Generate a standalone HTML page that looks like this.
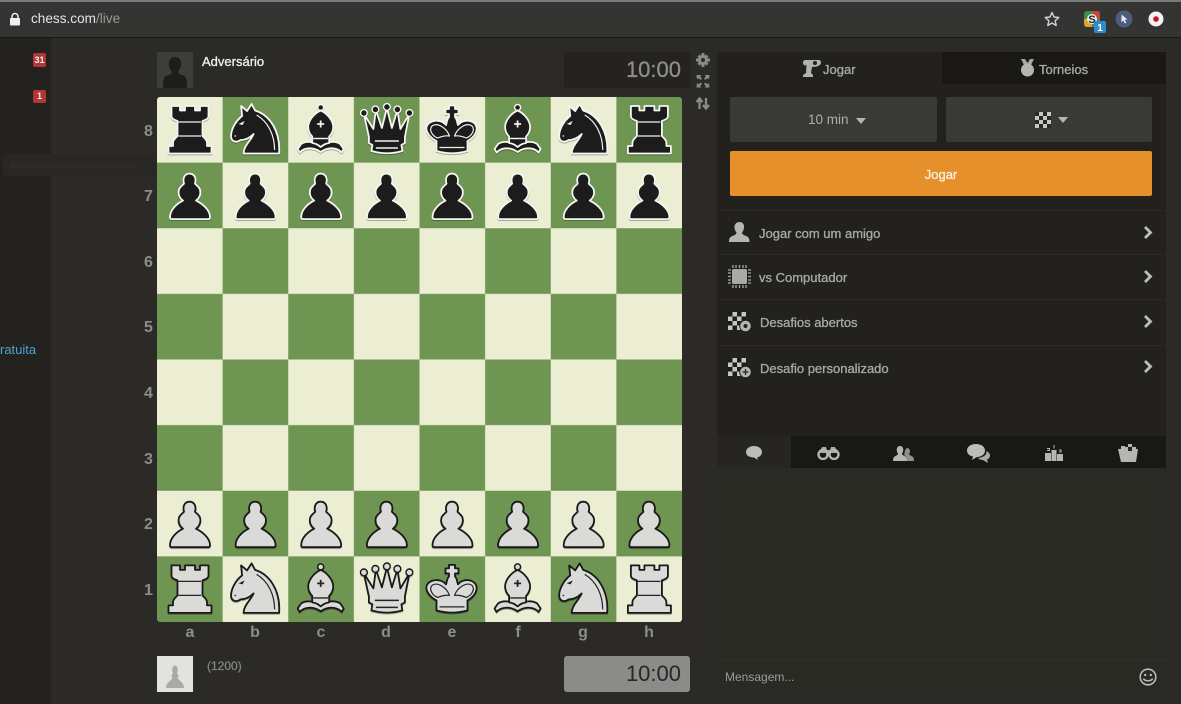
<!DOCTYPE html>
<html lang="pt"><head><meta charset="utf-8"><title>chess.com/live</title>
<style>
*{box-sizing:border-box}
html,body{margin:0;padding:0}
body{width:1181px;height:704px;overflow:hidden;position:relative;background:#2c2a27;font-family:"Liberation Sans",sans-serif;color:#bcbcb8}
.a{position:absolute}
.t{position:absolute;white-space:nowrap;line-height:1}
.st{-webkit-text-stroke:.3px currentColor}
.b{--f:#1c1c1c;--s:#f6f6f2;--i:#f0f0ec;filter:drop-shadow(0 1px 0 rgba(0,0,0,.3))}
.w{--f:#dadad8;--s:#191919;--i:#232323;filter:drop-shadow(0 1px 0 rgba(0,0,0,.3))}
.rank{position:absolute;left:144px;font:bold 16px "Liberation Sans",sans-serif;color:#8d8d89;line-height:1}
.file{position:absolute;top:625px;width:66px;text-align:center;font:bold 16px "Liberation Sans",sans-serif;color:#8d8d89;line-height:1}
.row{position:absolute;left:759px;font:13px "Liberation Sans",sans-serif;-webkit-text-stroke:.3px #a9a9a5;color:#a9a9a5;line-height:1;white-space:nowrap}
.div{position:absolute;left:720px;width:446px;height:1px;background:#2b2a26}
</style></head><body>
<svg width="0" height="0" style="position:absolute">
<defs>
<pattern id="chk" patternUnits="userSpaceOnUse" width="131.25" height="131.25"><rect width="131.25" height="131.25" fill="#eceed4"/><rect x="65.625" width="65.625" height="65.625" fill="#6f9552"/><rect y="65.625" width="65.625" height="65.625" fill="#6f9552"/></pattern>
<pattern id="mini" patternUnits="userSpaceOnUse" width="8" height="8"><rect width="8" height="8" fill="#c6c6c2"/><rect width="4" height="4" fill="#2a2927"/><rect x="4" y="4" width="4" height="4" fill="#2a2927"/></pattern>
<pattern id="mini2" patternUnits="userSpaceOnUse" width="9" height="9"><rect width="9" height="9" fill="#c6c6c2"/><rect width="4.500" height="4.500" fill="#1d1c1a"/><rect x="4.500" y="4.500" width="4.500" height="4.500" fill="#1d1c1a"/></pattern>
<symbol id="r" viewBox="0 0 66 66" width="66" height="66"><g stroke-linejoin="round">
<path fill="var(--f)" stroke="var(--s)" stroke-width="1.800" d="M14.500 9h8.500v4.500h5v-4.500h10v4.500h5v-4.500h8.500v10.500c0 2-3 3.500-6 4.500v15c2 2.500 4.500 3.500 4.500 7v3h4.500v7.500h-43v-7.500h4.500v-3c0-3.500 2.500-4.500 4.500-7v-15c-3-1-6-2.500-6-4.500z"/>
<path fill="none" stroke="var(--i)" stroke-width="1.300" d="M21.500 25h22.500M21.500 39h22.500"/></g></symbol>
<symbol id="n" viewBox="0 0 66 66" width="66" height="66"><g stroke-linejoin="round">
<path fill="var(--f)" stroke="var(--s)" stroke-width="1.800" d="M21 56.500C21 49 28 44 31 37C27 41 22 43 18 43C14 46 9 45 8.500 40C8 33 13 24 19.500 19L18.500 9L24.500 14L29 7L32.500 13.500C47 18 58 34 56.500 56.500Z"/>
<path fill="none" stroke="var(--i)" stroke-width="1.200" d="M34 18C46 25 52 39 52 53"/>
<path fill="var(--i)" d="M16 27l6-3-2 4zM12 38l2 1-2 1z"/></g></symbol>
<symbol id="B" viewBox="0 0 66 66" width="66" height="66"><g stroke-linejoin="round">
<circle cx="32.500" cy="10.500" r="3" fill="var(--f)" stroke="var(--s)" stroke-width="1.500"/>
<path fill="var(--f)" stroke="var(--s)" stroke-width="1.800" d="M32.500 49.500C28 44.500 18 43.500 13 47L9.500 52L11.500 55.500C16 50.500 25 49.500 32.500 55C40 49.500 49 50.500 53.500 55.500L55.500 52L52 47C47 43.500 37 44.500 32.500 49.500Z"/>
<path fill="var(--f)" stroke="var(--s)" stroke-width="1.800" d="M32.500 13.500C39.500 16.500 45 24 45 30C45 35 43 37.500 41 39.500V46C37 46.500 35 48 32.500 50C30 48 28 46.500 24 46V39.500C22 37.500 20 35 20 30C20 24 25.500 16.500 32.500 13.500Z"/>
<path fill="none" stroke="var(--i)" stroke-width="1.800" d="M32.500 23.500v7M29 27h7"/><path fill="none" stroke="var(--i)" stroke-width="1.400" d="M25 41.500h15"/></g></symbol>
<symbol id="q" viewBox="0 0 66 66" width="66" height="66"><g stroke-linejoin="round">
<path fill="var(--f)" stroke="var(--s)" stroke-width="1.800" d="M10 17L15 40V46L18.500 48L17.500 54Q33 58.500 48.500 54L47.500 48L51 46V40L55.500 17L46.500 32L43.500 13L38 31L33 11L28 31L22 13L19.500 32Z"/>
<g fill="var(--f)" stroke="var(--s)" stroke-width="1.400"><circle cx="10" cy="16" r="3.400"/><circle cx="21.500" cy="12.500" r="3.400"/><circle cx="33" cy="10" r="3.400"/><circle cx="43.500" cy="12.500" r="3.400"/><circle cx="55.500" cy="16" r="3.400"/></g>
<path fill="none" stroke="var(--i)" stroke-width="1.500" d="M21 44h24M22 51h22"/></g></symbol>
<symbol id="k" viewBox="0 0 66 66" width="66" height="66"><g stroke-linejoin="round">
<path fill="var(--f)" stroke="var(--s)" stroke-width="1.800" d="M29.500 8.500h6v3.500h3.500v5h-3.500v3C37.500 22 37.500 25 38.500 28C43 21.500 55 22.500 57 30C58 35 54 41 48 44V54Q32.500 58.500 17 54V44C11 41 6 35 7 30C9 22.500 22 21.500 26.500 28C27.500 25 27.500 22 29.500 20V17H26V12H29.500Z"/>
<path fill="none" stroke="var(--i)" stroke-width="1.200" d="M30 39C27 31 18 25 12.500 29C9 33 13 39 18 41C22 39.500 27 38.500 30 39ZM35 39C38 31 47 25 52.500 29C56 33 52 39 47 41C43 39.500 38 38.500 35 39ZM20 50.500h25"/></g></symbol>
<symbol id="p" viewBox="0 0 66 66" width="66" height="66"><path fill="var(--f)" stroke="var(--s)" stroke-width="1.800" stroke-linejoin="round" d="M13 54.500C13 47 20 41 26 38C22 35 21 31 22 27C23 24 26 22.500 27 21C25 14 29 11 32.500 11C36 11 40 14 38 21C39 22.500 42 24 43 27C44 31 43 35 39 38C45 41 53 47 53 54.500Q53 56.500 51 56.500H15Q13 56.500 13 54.500Z"/></symbol>
</defs></svg>

<!-- sidebar -->
<div class="a" style="left:0;top:38px;width:51px;height:666px;background:#23221f"></div>
<div class="a" style="left:3px;top:154px;width:154px;height:22px;background:#282724;border-radius:3px"></div>
<div class="a" style="left:10px;top:163px;width:125px;height:5px;background:#2c2b28"></div>
<div class="a" style="left:33px;top:53px;width:13px;height:14px;background:#b23636;border-radius:2px;color:#eee;font:bold 9px/14px 'Liberation Sans',sans-serif;text-align:center">31</div>
<div class="a" style="left:33px;top:90px;width:13px;height:13px;background:#b23636;border-radius:2px;color:#eee;font:bold 9px/13px 'Liberation Sans',sans-serif;text-align:center">1</div>
<div class="t" style="left:0;top:343px;font-size:13px;color:#4ba3cf">ratuita</div>

<!-- browser bar -->
<div class="a" style="left:0;top:0;width:1181px;height:38px;background:#343433;border-bottom:1px solid #191918;border-top:2px solid #7a7a7a"></div>
<svg class="a" style="left:9px;top:12px" width="12" height="14" viewBox="0 0 12 14"><path d="M3 7V4.500a3 3 0 0 1 6 0V7" fill="none" stroke="#f0f0f0" stroke-width="1.500"/><rect x="1" y="6" width="10" height="7.500" rx="1" fill="#f0f0f0"/></svg>
<div class="t" style="left:31px;top:12px;font-size:13.600px;color:#e4e4e4">chess.com<span style="color:#9a9a98">/live</span></div>
<svg class="a" style="left:1044px;top:11px" width="16" height="16" viewBox="0 0 16 16"><path d="M8 1.500l2 4.500 4.800.5-3.600 3.200 1 4.800L8 12l-4.200 2.500 1-4.800L1.200 6.500 6 6z" fill="none" stroke="#d2d2d2" stroke-width="1.400" stroke-linejoin="round"/></svg>
<svg class="a" style="left:1083px;top:10px" width="25" height="25" viewBox="0 0 25 25"><rect x="1" y="1" width="16" height="16" rx="3" fill="#3d8f4b"/><path d="M9 1h5a3 3 0 0 1 3 3v5H9z" fill="#c4453c"/><path d="M1 9h8v8H4a3 3 0 0 1-3-3z" fill="#d9a52e"/><circle cx="9" cy="9" r="5" fill="#eee"/><text x="9" y="13" font-size="11" font-weight="bold" text-anchor="middle" fill="#222" font-family="Liberation Sans,sans-serif">S</text><rect x="11" y="11" width="12" height="12" rx="2" fill="#2f8ccb"/><text x="17" y="21" font-size="10" font-weight="bold" text-anchor="middle" fill="#fff" font-family="Liberation Sans,sans-serif">1</text></svg>
<svg class="a" style="left:1115px;top:10px" width="18" height="18" viewBox="0 0 18 18"><circle cx="9" cy="9" r="8.500" fill="#4c5d7c"/><path d="M6.500 4.500l6 5-2.700.3 1.500 3-1.500.7-1.400-3-2 1.900z" fill="#e8e8ee"/></svg>
<svg class="a" style="left:1148px;top:11px" width="16" height="16" viewBox="0 0 16 16"><circle cx="8" cy="8" r="7.500" fill="#f2f2f2"/><circle cx="8" cy="8" r="2.800" fill="#c8102e"/></svg>

<!-- top player -->
<svg class="a" style="left:157px;top:52px" width="36" height="36" viewBox="0 0 36 36"><rect width="36" height="36" fill="#3d3d3b"/><path d="M18 5c4.500 0 6.500 3.500 6 8-.3 3-1.500 5-2.800 6.500-.3 2 1.300 3 4.800 4 3 1 4 3 4 12.500H6c0-9.500 1-11.500 4-12.500 3.500-1 5.100-2 4.800-4C13.500 18 12.300 16 12 13c-.5-4.500 1.500-8 6-8z" fill="#1d1d1c"/></svg>
<div class="t st" style="left:202px;top:55px;font-size:13px;color:#f0f0f0">Adversário</div>
<div class="a" style="left:564px;top:52px;width:126px;height:36px;background:#24231f;border-radius:3px"></div>
<div class="t st" style="right:500px;top:59px;font-size:22px;color:#8f8e8a">10:00</div>

<!-- side icons -->
<svg class="a" style="left:695px;top:52px" width="16" height="62" viewBox="0 0 16 62"><g fill="#8b8b87"><circle cx="8" cy="8" r="5"/><path d="M6.500 1h3v14h-3zM1 6.500h14v3H1zM2.500 4.600l2.100-2.100 9 9-2.100 2.100zM11.400 2.500l2.100 2.100-9 9-2.100-2.100z"/></g><circle cx="8" cy="8" r="2" fill="#2c2a27"/><path d="M1.500 23h5l-1.500 1.500 2 2-1.500 1.500-2-2L2 27.500zM14.500 23h-5l1.500 1.500-2 2 1.500 1.500 2-2 1.500 1.500zM1.500 35.500h5L5 34l2-2-1.500-1.500-2 2L2 31zM14.500 35.500h-5L11 34l-2-2 1.500-1.500 2 2 1.500-1.500z" fill="#8b8b87"/><path d="M4.500 57V47M1.500 50l3-3.500 3 3.500M11 46v10M8 53l3 3.500 3-3.500" fill="none" stroke="#8b8b87" stroke-width="2.300"/></svg>

<!-- board -->
<svg class="a" style="left:157px;top:97px" width="525" height="525" viewBox="0 0 525 525">
<rect width="525" height="525" rx="3" fill="url(#chk)"/>
<g class="b"><use href="#r" x="0" y="0"/><use href="#n" x="65.600" y="0"/><use href="#B" x="131.200" y="0"/><use href="#q" x="196.900" y="0"/><use href="#k" x="262.500" y="0"/><use href="#B" x="328.100" y="0"/><use href="#n" x="393.700" y="0"/><use href="#r" x="459.400" y="0"/>
<use href="#p" x="0" y="65.600"/><use href="#p" x="65.600" y="65.600"/><use href="#p" x="131.200" y="65.600"/><use href="#p" x="196.900" y="65.600"/><use href="#p" x="262.500" y="65.600"/><use href="#p" x="328.100" y="65.600"/><use href="#p" x="393.700" y="65.600"/><use href="#p" x="459.400" y="65.600"/></g>
<g class="w"><use href="#p" x="0" y="393.700"/><use href="#p" x="65.600" y="393.700"/><use href="#p" x="131.200" y="393.700"/><use href="#p" x="196.900" y="393.700"/><use href="#p" x="262.500" y="393.700"/><use href="#p" x="328.100" y="393.700"/><use href="#p" x="393.700" y="393.700"/><use href="#p" x="459.400" y="393.700"/>
<use href="#r" x="0" y="459.400"/><use href="#n" x="65.600" y="459.400"/><use href="#B" x="131.200" y="459.400"/><use href="#q" x="196.900" y="459.400"/><use href="#k" x="262.500" y="459.400"/><use href="#B" x="328.100" y="459.400"/><use href="#n" x="393.700" y="459.400"/><use href="#r" x="459.400" y="459.400"/></g>
</svg>
<div class="rank" style="top:124px">8</div><div class="rank" style="top:189px">7</div><div class="rank" style="top:255px">6</div><div class="rank" style="top:320px">5</div><div class="rank" style="top:386px">4</div><div class="rank" style="top:452px">3</div><div class="rank" style="top:517px">2</div><div class="rank" style="top:583px">1</div>
<div class="file" style="left:157px">a</div><div class="file" style="left:222px">b</div><div class="file" style="left:288px">c</div><div class="file" style="left:353px">d</div><div class="file" style="left:419px">e</div><div class="file" style="left:485px">f</div><div class="file" style="left:550px">g</div><div class="file" style="left:616px">h</div>

<!-- bottom player -->
<svg class="a" style="left:157px;top:656px" width="36" height="36" viewBox="0 0 36 36"><rect width="36" height="36" fill="#e2e2e0"/><path d="M9 32c0-5 4-7 6.500-9.500-1-2-1-3-.5-4l1-1c-1.500-3-1-8 2-8s3.500 5 2 8l1 1c.5 1 .5 2-.5 4C23 25 27 27 27 32z" fill="#a9a9a7"/></svg>
<div class="t st" style="left:207px;top:660px;font-size:12px;color:#83837f">(1200)</div>
<div class="a" style="left:564px;top:656px;width:126px;height:36px;background:#8b8b8a;border-radius:3px"></div>
<div class="t" style="right:500px;top:663px;font-size:22px;color:#262624">10:00</div>

<!-- right panel -->
<div class="a" style="left:717px;top:52px;width:449px;height:384px;background:#22211d;border-radius:3px 3px 0 0"></div>
<div class="a" style="left:717px;top:468px;width:449px;height:224px;background:#2a2a25"></div>
<div class="a" style="left:942px;top:52px;width:224px;height:32px;background:#191815"></div>
<svg class="a" style="left:802px;top:59px" width="19" height="18" viewBox="0 0 19 18"><path d="M3 1h14c1 0 2 1 2 2.500 0 3-4 4.500-9 4.500L9 14l2 2v2H1v-2l3-2 .5-8C3 7 1 6 1 3.500 1 2 2 1 3 1z" fill="#b1b1ad"/><circle cx="13" cy="4" r="2" fill="#22211d"/></svg>
<div class="t st" style="left:823px;top:63px;font-size:13px;color:#a9a9a5">Jogar</div>
<svg class="a" style="left:1020px;top:59px" width="15" height="18" viewBox="0 0 15 18"><path d="M1 0h4l2.500 4L10 0h4l-3 6H4z" fill="#a5a5a1"/><circle cx="7.500" cy="11" r="6.500" fill="#b5b5b1"/></svg>
<div class="t st" style="left:1039px;top:63px;font-size:13px;color:#a9a9a5">Torneios</div>

<div class="a" style="left:730px;top:97px;width:207px;height:45px;background:#393937;border-radius:2px"></div>
<div class="t" style="left:808px;top:113px;font-size:13.500px;color:#aeaeaa">10 min</div>
<svg class="a" style="left:856px;top:118px" width="10" height="6" viewBox="0 0 10 6"><path d="M0 0h10L5 6z" fill="#b4b4b0"/></svg>
<div class="a" style="left:946px;top:97px;width:206px;height:45px;background:#393937;border-radius:2px"></div>
<svg class="a" style="left:1035px;top:112px" width="16" height="16" viewBox="0 0 16 16"><rect width="16" height="16" fill="url(#mini)"/></svg>
<svg class="a" style="left:1058px;top:117px" width="10" height="6" viewBox="0 0 10 6"><path d="M0 0h10L5 6z" fill="#b4b4b0"/></svg>
<div class="a" style="left:730px;top:151px;width:422px;height:45px;background:#e6902b;border-radius:2px"></div>
<div class="t st" style="left:730px;width:422px;text-align:center;top:168px;font-size:13px;color:#f8f0e4">Jogar</div>

<div class="div" style="top:210px"></div><div class="div" style="top:254px"></div><div class="div" style="top:299px"></div><div class="div" style="top:345px"></div>
<svg class="a" style="left:729px;top:222px" width="21" height="20" viewBox="0 0 21 20"><path d="M10.500 0c3.500 0 5 3 4.500 6-.3 2-1 3.500-2 4.500 0 2 2 2.500 4 3.500 3 1 3.500 3 3.500 6H0c0-3 .5-5 3.500-6 2-1 4-1.500 4-3.500-1-1-1.700-2.500-2-4.500C5 3 7 0 10.500 0z" fill="#b5b5b1"/></svg>
<div class="row" style="top:227px">Jogar com um amigo</div>
<svg class="a" style="left:728px;top:265px" width="23" height="23" viewBox="0 0 23 23"><rect x="3.500" y="3.500" width="16" height="16" rx="2" fill="#a9a9a5" stroke="#1d1d1b"/><path d="M5 0v3M8 0v3M11.500 0v3M15 0v3M18 0v3M5 20v3M8 20v3M11.500 20v3M15 20v3M18 20v3M0 5h3M0 8h3M0 11.500h3M0 15h3M0 18h3M20 5h3M20 8h3M20 11.500h3M20 15h3M20 18h3" stroke="#a9a9a5" stroke-width="1.300"/></svg>
<div class="row" style="top:271px">vs Computador</div>
<svg class="a" style="left:728px;top:312px" width="24" height="21" viewBox="0 0 24 21"><rect width="18" height="18" fill="url(#mini2)"/><circle cx="17.500" cy="14" r="5.800" fill="#b5b5b1" stroke="#22211d"/><circle cx="17.500" cy="14" r="2" fill="#22211d"/></svg>
<div class="row" style="top:316px;left:760px">Desafios abertos</div>
<svg class="a" style="left:728px;top:358px" width="24" height="21" viewBox="0 0 24 21"><rect width="18" height="18" fill="url(#mini2)"/><circle cx="17.500" cy="14" r="5.800" fill="#b5b5b1" stroke="#22211d"/><path d="M17.500 11v6M14.500 14h6" stroke="#22211d" stroke-width="1.300"/></svg>
<div class="row" style="top:362px;left:760px">Desafio personalizado</div>
<svg class="a" style="left:1143px;top:226px" width="10" height="150" viewBox="0 0 10 150"><g fill="none" stroke="#bdbdb9" stroke-width="2.800"><path d="M2 1l5.500 5.500L2 12"/><path d="M2 45l5.500 5.500L2 56"/><path d="M2 90l5.500 5.500L2 101"/><path d="M2 135l5.500 5.500L2 146"/></g></svg>

<!-- chat tabs -->
<div class="a" style="left:717px;top:436px;width:449px;height:32px;background:#181815"></div>
<div class="a" style="left:717px;top:436px;width:74px;height:32px;background:#262522"></div>
<svg class="a" style="left:745px;top:445px" width="18" height="16" viewBox="0 0 18 16"><path d="M9 1c4.500 0 8 2.500 8 6 0 3-2.500 5-5 5.500l1 2.500-4-2.500c-4.500 0-8-2-8-5.500s3.500-6 8-6z" fill="#bcbcb8"/></svg>
<svg class="a" style="left:817px;top:446px" width="23" height="14" viewBox="0 0 23 14"><path d="M5 1h4l1 3h3l1-3h4l3 6H2z" fill="#a9a9a5"/><circle cx="6" cy="8.500" r="4.500" fill="none" stroke="#b5b5b1" stroke-width="2.400"/><circle cx="17" cy="8.500" r="4.500" fill="none" stroke="#b5b5b1" stroke-width="2.400"/></svg>
<svg class="a" style="left:893px;top:445px" width="21" height="16" viewBox="0 0 21 16"><path d="M14 3a3 3 0 0 1 3 3c0 1.500-.5 2.500-1 3 0 1 2 1.500 3.500 2.500 1 .7 1.500 2 1.500 4.500h-7c0-3-1-5-3-6 1-1 0-5 3-7z" fill="#8f8f8b"/><path d="M7 1c2.500 0 3.500 2 3.200 4.500-.2 1.500-.7 2.500-1.200 3 0 1.500 1.500 2 3 2.700 1.500.7 2 2.300 2 4.800H0c0-2.500.5-4.100 2-4.800 1.500-.7 3-1.200 3-2.700-.5-.5-1-1.500-1.200-3C3.500 3 4.500 1 7 1z" fill="#b5b5b1"/></svg>
<svg class="a" style="left:967px;top:444px" width="23" height="20" viewBox="0 0 23 20"><path d="M9 0c5 0 9 2.500 9 6.500S14 13 10 13l-5 3 1-3.500C3 12 0 10 0 6.500 0 2.500 4 0 9 0z" fill="#bcbcb8"/><path d="M19.500 7c2 1 3.500 2.500 3.500 4.500s-1.300 3.500-3 4l1 3.500-5-3c-2 0-4-.6-5-2 5-.5 9-3 8.500-7z" fill="#a9a9a5"/></svg>
<svg class="a" style="left:1045px;top:445px" width="18" height="16" viewBox="0 0 18 16"><path d="M0 8h6v8H0zM6.500 5h5v11h-5zM12 9h6v7h-6z" fill="#b5b5b1"/><path d="M9 0v3.500M2 3.500h2.500v2h-2.500M14 5h2v2h-2" stroke="#b5b5b1" fill="none"/></svg>
<svg class="a" style="left:1118px;top:444px" width="20" height="18" viewBox="0 0 20 18"><path d="M0 5h20l-2 13H3z" fill="#b5b5b1"/><path d="M3 2h4v3H3zM10 0h4v3h-4zM14 3h4v3h-4zM7 3h3v3H7z" fill="#b5b5b1"/><path d="M7 2h3v1H7zM14 1h3v2h-3zM10 4h4v3h-4z" fill="#232320"/></svg>

<!-- message input -->
<div class="a" style="left:717px;top:660px;width:449px;height:1px;background:#31312c"></div>
<div class="t" style="left:725px;top:671px;font-size:12px;color:#9b9b97">Mensagem...</div>
<svg class="a" style="left:1139px;top:668px" width="18" height="18" viewBox="0 0 18 18"><circle cx="9" cy="9" r="7.800" fill="none" stroke="#b9b9b5" stroke-width="1.600"/><circle cx="6.200" cy="7" r="1.200" fill="#b9b9b5"/><circle cx="11.800" cy="7" r="1.200" fill="#b9b9b5"/><path d="M4.500 10.500c1 3 8 3 9 0" fill="none" stroke="#b9b9b5" stroke-width="1.500"/></svg>
</body></html>
